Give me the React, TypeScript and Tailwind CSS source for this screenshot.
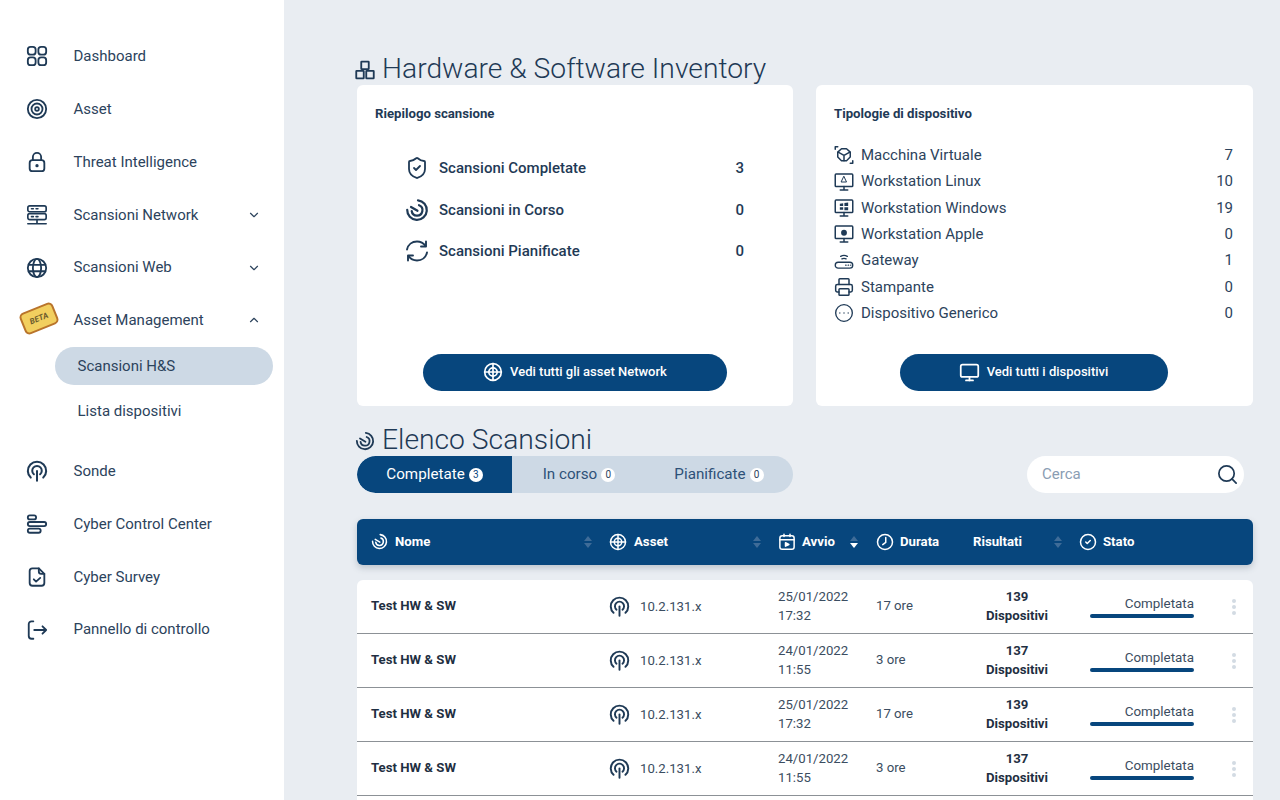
import type { ReactNode } from "react";
import {
  ChevronDown,
  ChevronUp,
  CircleCheck,
  CircleEllipsis,
  Monitor,
  Printer,
  Search,
  ShieldCheck,
  Target,
} from "lucide-react";

function Svg({ size = 22, sw = 2, className, children }: { size?: number; sw?: number; className?: string; children: ReactNode }) {
  return (
    <svg
      width={size}
      height={size}
      viewBox="0 0 24 24"
      fill="none"
      stroke="currentColor"
      strokeWidth={sw}
      strokeLinecap="round"
      strokeLinejoin="round"
      className={className}
    >
      {children}
    </svg>
  );
}

const DashIcon = () => (
  <Svg>
    <rect x="2" y="2" width="8.5" height="8.5" rx="3" />
    <rect x="13.5" y="2" width="8.5" height="8.5" rx="3" />
    <rect x="2" y="13.5" width="8.5" height="8.5" rx="3" />
    <rect x="13.5" y="13.5" width="8.5" height="8.5" rx="3" />
  </Svg>
);

const LockIcon = () => (
  <Svg>
    <rect x="4" y="10" width="16" height="12" rx="3" />
    <path d="M7.500 10V6.500a4.500 4.500 0 0 1 9 0V10" />
    <circle cx="12" cy="16" r="0.8" fill="currentColor" />
  </Svg>
);

const GlobeIcon = () => (
  <Svg>
    <circle cx="12" cy="12" r="10" />
    <ellipse cx="12" cy="12" rx="4.500" ry="10" />
    <path d="M3 8.500h18M3 15.500h18" />
  </Svg>
);

const ServerIcon = () => (
  <Svg sw={1.8}>
    <rect x="2" y="2" width="20" height="6.5" rx="2" />
    <rect x="2" y="10.5" width="20" height="6.5" rx="2" />
    <path d="M6 5.2h2M11 5.2h2M6 13.8h2M11 13.8h2M2 21.5h20M12 17v4.5" />
  </Svg>
);

const AntennaIcon = ({ size = 22 }: { size?: number }) => (
  <Svg size={size} sw={2.2}>
    <path d="M5.2 19.2a10 10 0 1 1 13.6 0" />
    <path d="M8.6 15.6a5.2 5.2 0 1 1 6.8 0" />
    <path d="M12 12v10.5" />
  </Svg>
);

const ControlIcon = () => (
  <Svg>
    <rect x="2" y="2.5" width="9" height="4.5" rx="2.2" />
    <rect x="2" y="9.8" width="20" height="4.5" rx="2.2" />
    <rect x="2" y="17" width="14" height="4.5" rx="2.2" />
  </Svg>
);

const SurveyIcon = () => (
  <Svg>
    <path d="M14 2.5H7a3 3 0 0 0-3 3v13a3 3 0 0 0 3 3h10a3 3 0 0 0 3-3V8.5z" />
    <path d="M14 2.5v3.5a2.5 2.5 0 0 0 2.5 2.5H20" />
    <path d="M8.5 14.5l2.5 2.5 4.5-4" />
  </Svg>
);

const ExitIcon = () => (
  <Svg>
    <path d="M8 2.5H6a3 3 0 0 0-3 3v13a3 3 0 0 0 3 3h2" />
    <path d="M9 12h13M18 8l4 4-4 4" />
  </Svg>
);

const BlocksIcon = () => (
  <Svg size={20} sw={2.2}>
    <rect x="7.500" y="2" width="9" height="9" rx="0.5" />
    <rect x="1.500" y="13" width="9" height="9" rx="0.5" />
    <rect x="13.500" y="13" width="9" height="9" rx="0.5" />
  </Svg>
);

const SpiralIcon = ({ size = 24, sw = 2.2 }: { size?: number; sw?: number }) => (
  <Svg size={size} sw={sw}>
    <path d="M13 2.300a9.800 9.800 0 1 1-10.800 9.500" />
    <path d="M14 7.200a5.400 5.400 0 1 1-7.300 5.800" />
    <path d="M6 9l6.500 3.800" />
  </Svg>
);

const SyncIcon = () => (
  <Svg size={24} sw={1.9}>
    <path d="M2 10.5C3 5.8 7 2.5 12 2.5c3.6 0 6.5 1.6 8.5 4.5" />
    <path d="M21 2.5V7.5h-5" />
    <path d="M22 13.5c-1 4.7-5 8-10 8-3.6 0-6.5-1.6-8.5-4.5" />
    <path d="M3 21.5v-5h5" />
  </Svg>
);

const CrossGlobe = ({ size = 18 }: { size?: number }) => (
  <Svg size={size} sw={2}>
    <circle cx="12" cy="12" r="10" />
    <circle cx="12" cy="12" r="5" />
    <path d="M12 2v20M2 12h20" />
  </Svg>
);

const CalendarPlay = () => (
  <Svg size={18} sw={2}>
    <rect x="2.5" y="3.5" width="19" height="18" rx="3" />
    <path d="M2.5 9h19M8 1.5v3M16 1.5v3" />
    <path d="M10 13l4.5 2.3L10 17.5z" fill="currentColor" />
  </Svg>
);

const ClockHands = () => (
  <Svg size={18} sw={2}>
    <circle cx="12" cy="12" r="10" />
    <path d="M13 6v6.5L9 15.5" />
  </Svg>
);

const CubeIcon = () => (
  <Svg size={20} sw={1.8}>
    <path d="M9 4.500h6l4.500 4v6l-4.500 4.500H9l-4.500-4.500v-6z" />
    <path d="M5 8.500l7 4 7-4M12 12.500V19" />
    <path d="M1.500 5V2h3M22.500 19v3h-3" />
  </Svg>
);

const Desktop = ({ children }: { children?: ReactNode }) => (
  <Svg size={20} sw={1.8}>
    <rect x="1.5" y="2.5" width="21" height="15" rx="1" />
    <path d="M12 17.5V21M7.5 21.5h9" />
    {children}
  </Svg>
);

const GatewayIcon = () => (
  <Svg size={20} sw={1.6}>
    <rect x="1.5" y="13.5" width="21" height="7" rx="3.5" />
    <path d="M8 6.5c2.400-1.400 5.600-1.400 8 0M9.500 9.500c1.500-.8 3.500-.8 5 0" />
    <path d="M14 17h.5M17 17h.5M20 17h.1" />
  </Svg>
);

const BetaBadge = () => (
  <div className="absolute left-[-53px] top-[-2px] flex h-[23px] w-[36px] -rotate-[22deg] items-center justify-center rounded-[5px] border-2 border-[#b9742b] bg-[#f2cf5f]">
    <span className="text-[8px] font-bold italic text-[#6b5a2c]">BETA</span>
  </div>
);

function NavItem({ icon, label, chevron, badge }: { icon?: ReactNode; label: string; chevron?: "up" | "down"; badge?: boolean }) {
  return (
    <div className="flex h-[52.8px] items-center pl-[25.5px] pr-[23px] text-[15px] text-[#2c435c]">
      <span className="flex w-[48px] shrink-0 text-[#1f3a56]">{icon}</span>
      <span className="relative flex-1">
        {badge && <BetaBadge />}
        {label}
      </span>
      {chevron === "down" && <ChevronDown size={14} strokeWidth={2} />}
      {chevron === "up" && <ChevronUp size={14} strokeWidth={2} />}
    </div>
  );
}

function Sidebar() {
  return (
    <aside className="w-[284px] shrink-0 bg-white pt-[30px]">
      <NavItem icon={<DashIcon />} label="Dashboard" />
      <NavItem icon={<Target size={22} strokeWidth={2} />} label="Asset" />
      <NavItem icon={<LockIcon />} label="Threat Intelligence" />
      <NavItem icon={<ServerIcon />} label="Scansioni Network" chevron="down" />
      <NavItem icon={<GlobeIcon />} label="Scansioni Web" chevron="down" />
      <NavItem label="Asset Management" chevron="up" badge />
      <div className="ml-[55px] mr-[11px] flex flex-col text-[15px] text-[#2c435c]">
        <div className="flex h-[38px] items-center rounded-full bg-[#cdd9e5] pl-[22.5px]">Scansioni H&amp;S</div>
        <div className="mt-[7px] flex h-[38px] items-center pl-[22.5px]">Lista dispositivi</div>
      </div>
      <div className="mt-[15px]">
        <NavItem icon={<AntennaIcon />} label="Sonde" />
        <NavItem icon={<ControlIcon />} label="Cyber Control Center" />
        <NavItem icon={<SurveyIcon />} label="Cyber Survey" />
        <NavItem icon={<ExitIcon />} label="Pannello di controllo" />
      </div>
    </aside>
  );
}

function Heading({ icon, children }: { icon: ReactNode; children: ReactNode }) {
  return (
    <div className="flex h-[34px] shrink-0 items-end text-[#1f3a56]">
      <span className="mb-[5px] ml-[-2px] w-[27px] shrink-0">{icon}</span>
      <h1 className="text-[28.25px] font-light leading-[32px] text-[#1f3a56]">{children}</h1>
    </div>
  );
}

function CardButton({ width, icon, children }: { width: string; icon: ReactNode; children: ReactNode }) {
  return (
    <button className={`mt-auto mb-[15px] flex h-[37px] items-center justify-center gap-[7px] self-center rounded-full bg-[#07467d] pb-[1px] text-[13px] font-medium text-white ${width}`}>
      {icon}
      {children}
    </button>
  );
}

const summary = [
  { icon: <ShieldCheck size={24} strokeWidth={1.8} />, label: "Scansioni Completate", value: 3 },
  { icon: <SpiralIcon />, label: "Scansioni in Corso", value: 0 },
  { icon: <SyncIcon />, label: "Scansioni Pianificate", value: 0 },
];

const devices = [
  { icon: <CubeIcon />, label: "Macchina Virtuale", value: 7 },
  {
    icon: (
      <Desktop>
        <path d="M12 5.500l3 6.500H9z" strokeWidth={1.2} />
      </Desktop>
    ),
    label: "Workstation Linux",
    value: 10,
  },
  {
    icon: (
      <Desktop>
        <path d="M7 7l4-.7V9.500H7zM12.500 6l4.500-.700V9.500h-4.500zM7 11h4v3H7zM12.500 11H17v3.700h-4.500z" fill="currentColor" stroke="none" />
      </Desktop>
    ),
    label: "Workstation Windows",
    value: 19,
  },
  {
    icon: (
      <Desktop>
        <circle cx="12" cy="10.500" r="3.500" fill="currentColor" stroke="none" />
      </Desktop>
    ),
    label: "Workstation Apple",
    value: 0,
  },
  { icon: <GatewayIcon />, label: "Gateway", value: 1 },
  { icon: <Printer size={20} strokeWidth={1.8} />, label: "Stampante", value: 0 },
  { icon: <CircleEllipsis size={20} strokeWidth={1.6} />, label: "Dispositivo Generico", value: 0 },
];

function Tab({ label, count, active }: { label: string; count: number; active?: boolean }) {
  return (
    <div className={`flex h-full items-center justify-center gap-[4px] text-[15.2px] ${active ? "w-[155px] rounded-l-full bg-[#07467d] text-white" : "w-[140px] pr-[6px] text-[#2d5178]"}`}>
      {label}
      <span className={`flex h-[14px] w-[14px] items-center justify-center rounded-full bg-white text-[10px] ${active ? "text-[#07467d]" : "text-[#2c435c]"}`}>{count}</span>
    </div>
  );
}

function Sort({ on }: { on?: boolean }) {
  return (
    <span className="flex w-[10px] flex-col items-center gap-[2px]">
      <span className="h-0 w-0 border-x-[4px] border-b-[5px] border-x-transparent border-b-[#3f6c98]" />
      <span className={`h-0 w-0 border-x-[4px] border-t-[5px] border-x-transparent ${on ? "border-t-white" : "border-t-[#3f6c98]"}`} />
    </span>
  );
}

function HeaderRow() {
  return (
    <div className="grid h-[46px] grid-cols-[238px_169px_98px_97px_106px_1fr] items-center rounded-md bg-[#07467d] pl-[14px] text-[13.2px] font-bold text-white shadow-[0_3px_6px_rgba(60,80,100,0.25)]">
      <div className="flex items-center gap-[7px] pr-[16px]">
        <SpiralIcon size={17} />
        <span className="flex-1">Nome</span>
        <Sort />
      </div>
      <div className="flex items-center gap-[7px] pr-[16px]">
        <CrossGlobe />
        <span className="flex-1">Asset</span>
        <Sort />
      </div>
      <div className="flex items-center gap-[6px] pr-[17px]">
        <CalendarPlay />
        <span className="flex-1">Avvio</span>
        <Sort on />
      </div>
      <div className="flex items-center gap-[6px]">
        <ClockHands />
        Durata
      </div>
      <div className="flex items-center pr-[16px]">
        <span className="flex-1">Risultati</span>
        <Sort />
      </div>
      <div className="flex items-center gap-[6px]">
        <CircleCheck size={18} strokeWidth={2} />
        Stato
      </div>
    </div>
  );
}

const scans = [
  { date: "25/01/2022", time: "17:32", dur: "17 ore", res: 139 },
  { date: "24/01/2022", time: "11:55", dur: "3 ore", res: 137 },
  { date: "25/01/2022", time: "17:32", dur: "17 ore", res: 139 },
  { date: "24/01/2022", time: "11:55", dur: "3 ore", res: 137 },
];

function ScanRow({ scan }: { scan: (typeof scans)[number] }) {
  return (
    <div className="grid h-[54px] shrink-0 grid-cols-[238px_169px_98px_97px_106px_115px_1fr] items-center border-b border-[#8c9196] bg-white pb-[2px] pl-[14px] text-[13.2px] text-[#3b4d61] first:rounded-t-md">
      <div className="font-bold text-[#1f2f42]">Test HW &amp; SW</div>
      <div className="flex items-center gap-[10px] pt-[2px]">
        <span className="text-[#1f3a56]">
          <AntennaIcon size={21} />
        </span>
        10.2.131.x
      </div>
      <div className="leading-[19px]">
        {scan.date}
        <br />
        {scan.time}
      </div>
      <div>{scan.dur}</div>
      <div className="w-[88px] text-center font-bold leading-[19px] text-[#1f2f42]">
        {scan.res}
        <br />
        Dispositivi
      </div>
      <div className="flex flex-col items-end pl-[11px] pt-[2px]">
        <span className="text-[13.4px] leading-[17px]">Completata</span>
        <span className="mt-[2px] h-[4px] w-full rounded-full bg-[#07467d]" />
      </div>
      <div className="flex flex-col items-center gap-[2px] pl-[21px] pt-[2px]">
        <span className="h-[4px] w-[4px] rounded-full bg-[#d3dbe3]" />
        <span className="h-[4px] w-[4px] rounded-full bg-[#d3dbe3]" />
        <span className="h-[4px] w-[4px] rounded-full bg-[#d3dbe3]" />
      </div>
    </div>
  );
}

export default function App() {
  return (
    <div className="flex h-[800px] w-[1280px] overflow-hidden bg-[#e9edf2] font-[family-name:Roboto,sans-serif]">
      <Sidebar />
      <main className="flex min-w-0 flex-1 flex-col pl-[73px] pr-[27px] pt-[51px]">
        <Heading icon={<BlocksIcon />}>Hardware &amp; Software Inventory</Heading>

        <div className="grid h-[321px] shrink-0 grid-cols-[436px_437px] gap-x-[23px]">
          <section className="flex flex-col rounded-md bg-white">
            <h2 className="pl-[18px] pt-[20px] text-[13.2px] font-bold leading-[18px] text-[#1f3a56]">Riepilogo scansione</h2>
            <div className="mt-[24.5px] flex flex-col pl-[48px] pr-[49px]">
              {summary.map((row) => (
                <div key={row.label} className="flex h-[41.5px] items-center text-[15px] font-medium text-[#1f3a56]">
                  <span className="w-[34px] shrink-0">{row.icon}</span>
                  <span className="flex-1">{row.label}</span>
                  {row.value}
                </div>
              ))}
            </div>
            <CardButton width="w-[304px]" icon={<CrossGlobe size={20} />}>
              Vedi tutti gli asset Network
            </CardButton>
          </section>

          <section className="flex flex-col rounded-md bg-white">
            <h2 className="pl-[18px] pt-[20px] text-[13.2px] font-bold leading-[18px] text-[#1f3a56]">Tipologie di dispositivo</h2>
            <div className="mt-[19.2px] flex flex-col pl-[18px] pr-[20px]">
              {devices.map((row) => (
                <div key={row.label} className="flex h-[26.3px] items-center text-[15px] text-[#2c435c]">
                  <span className="w-[27px] shrink-0 text-[#1f3a56]">{row.icon}</span>
                  <span className="flex-1">{row.label}</span>
                  {row.value}
                </div>
              ))}
            </div>
            <div className="mt-auto mr-[2px] flex justify-center">
              <CardButton width="w-[268px]" icon={<Monitor size={21} strokeWidth={2} />}>
                Vedi tutti i dispositivi
              </CardButton>
            </div>
          </section>
        </div>

        <div className="mt-[16px] shrink-0">
          <Heading icon={<SpiralIcon size={20} />}>Elenco Scansioni</Heading>
        </div>

        <div className="flex h-[37px] shrink-0 justify-between pr-[9px]">
          <div className="flex h-full w-[436px] overflow-hidden rounded-full bg-[#cdd9e5]">
            <Tab label="Completate" count={3} active />
            <Tab label="In corso" count={0} />
            <Tab label="Pianificate" count={0} />
          </div>
          <div className="flex h-full w-[217px] items-center justify-between rounded-full bg-white pl-[15px] pr-[5px] text-[15px] text-[#8a9db3]">
            Cerca
            <Search size={23} strokeWidth={1.8} className="text-[#1f3a56]" />
          </div>
        </div>

        <div className="mt-[26px] shrink-0">
          <HeaderRow />
        </div>

        <div className="mt-[15px] flex shrink-0 flex-col">
          {scans.map((scan, i) => (
            <ScanRow key={i} scan={scan} />
          ))}
          <div className="h-[40px] shrink-0 bg-white" />
        </div>
      </main>
    </div>
  );
}
